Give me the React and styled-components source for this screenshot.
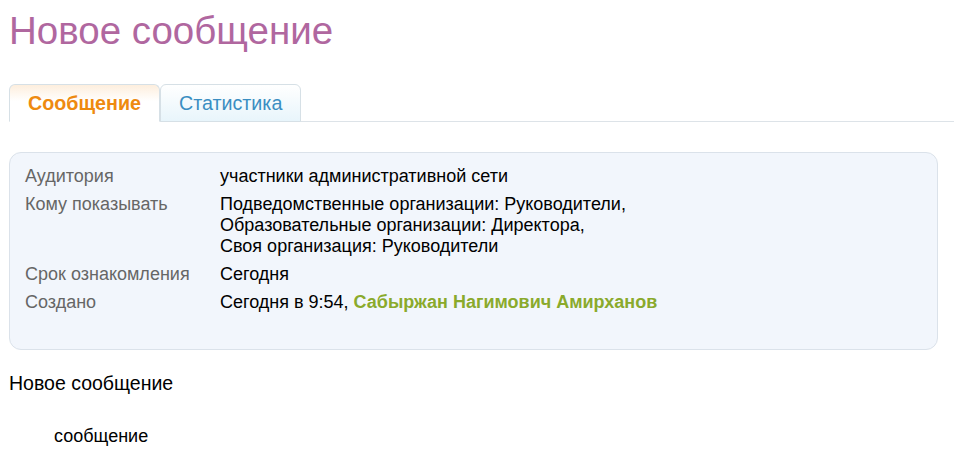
import React from 'react';
import styled, { createGlobalStyle } from 'styled-components';

const GlobalStyle = createGlobalStyle`
  body {
    margin: 0;
    background: #fff;
    font-family: "Liberation Sans", Arial, sans-serif;
  }
`;

const Page = styled.div`
  padding: 0 16px 0 9px;
`;

const Title = styled.h1`
  margin: 0;
  padding-top: 8px;
  font-weight: normal;
  font-size: 38.5px;
  line-height: 46px;
  color: #b0679f;
`;

const Tabs = styled.div`
  display: flex;
  margin: 30px -16px 0 0;
  border-bottom: 1px solid #dde3e8;
`;

const Tab = styled.div`
  padding: 0 18px;
  height: 36px;
  line-height: 36px;
  margin-bottom: -1px;
  border: 1px solid #d6e0e6;
  border-bottom: ${p => (p.active ? '1px solid #fff' : '1px solid #d6e0e6')};
  border-radius: 6px 6px 0 0;
  font-size: 19.7px;
  font-weight: ${p => (p.active ? 'bold' : 'normal')};
  color: ${p => (p.active ? '#ee8a10' : '#3a8ec2')};
  background: ${p =>
    p.active
      ? 'linear-gradient(to bottom, #fdeedd 0%, #ffffff 45%)'
      : 'linear-gradient(to bottom, #ffffff 0%, #e8f5fb 100%)'};
`;

const Panel = styled.div`
  margin-top: 30px;
  padding: 13px 15px 36px;
  background: #f2f6fc;
  border: 1px solid #dbe2ea;
  border-radius: 12px;
  display: grid;
  grid-template-columns: 195px 1fr;
  row-gap: 7px;
  font-size: 18px;
  line-height: 21px;
`;

const Label = styled.div`
  color: #666;
`;

const Value = styled.div`
  color: #000;
`;

const Author = styled.span`
  font-weight: bold;
  color: #8aaa2c;
`;

const Subject = styled.div`
  margin-top: 22px;
  font-size: 19.5px;
  color: #000;
`;

const Body = styled.div`
  margin: 31px 0 0 45px;
  font-size: 18px;
  color: #000;
`;

export default function App() {
  return (
    <Page>
      <GlobalStyle />
      <Title>Новое сообщение</Title>
      <Tabs>
        <Tab active>Сообщение</Tab>
        <Tab>Статистика</Tab>
      </Tabs>
      <Panel>
        <Label>Аудитория</Label>
        <Value>участники административной сети</Value>
        <Label>Кому показывать</Label>
        <Value>
          Подведомственные организации: Руководители,<br />
          Образовательные организации: Директора,<br />
          Своя организация: Руководители
        </Value>
        <Label>Срок ознакомления</Label>
        <Value>Сегодня</Value>
        <Label>Создано</Label>
        <Value>
          Сегодня в 9:54, <Author>Сабыржан Нагимович Амирханов</Author>
        </Value>
      </Panel>
      <Subject>Новое сообщение</Subject>
      <Body>сообщение</Body>
    </Page>
  );
}
